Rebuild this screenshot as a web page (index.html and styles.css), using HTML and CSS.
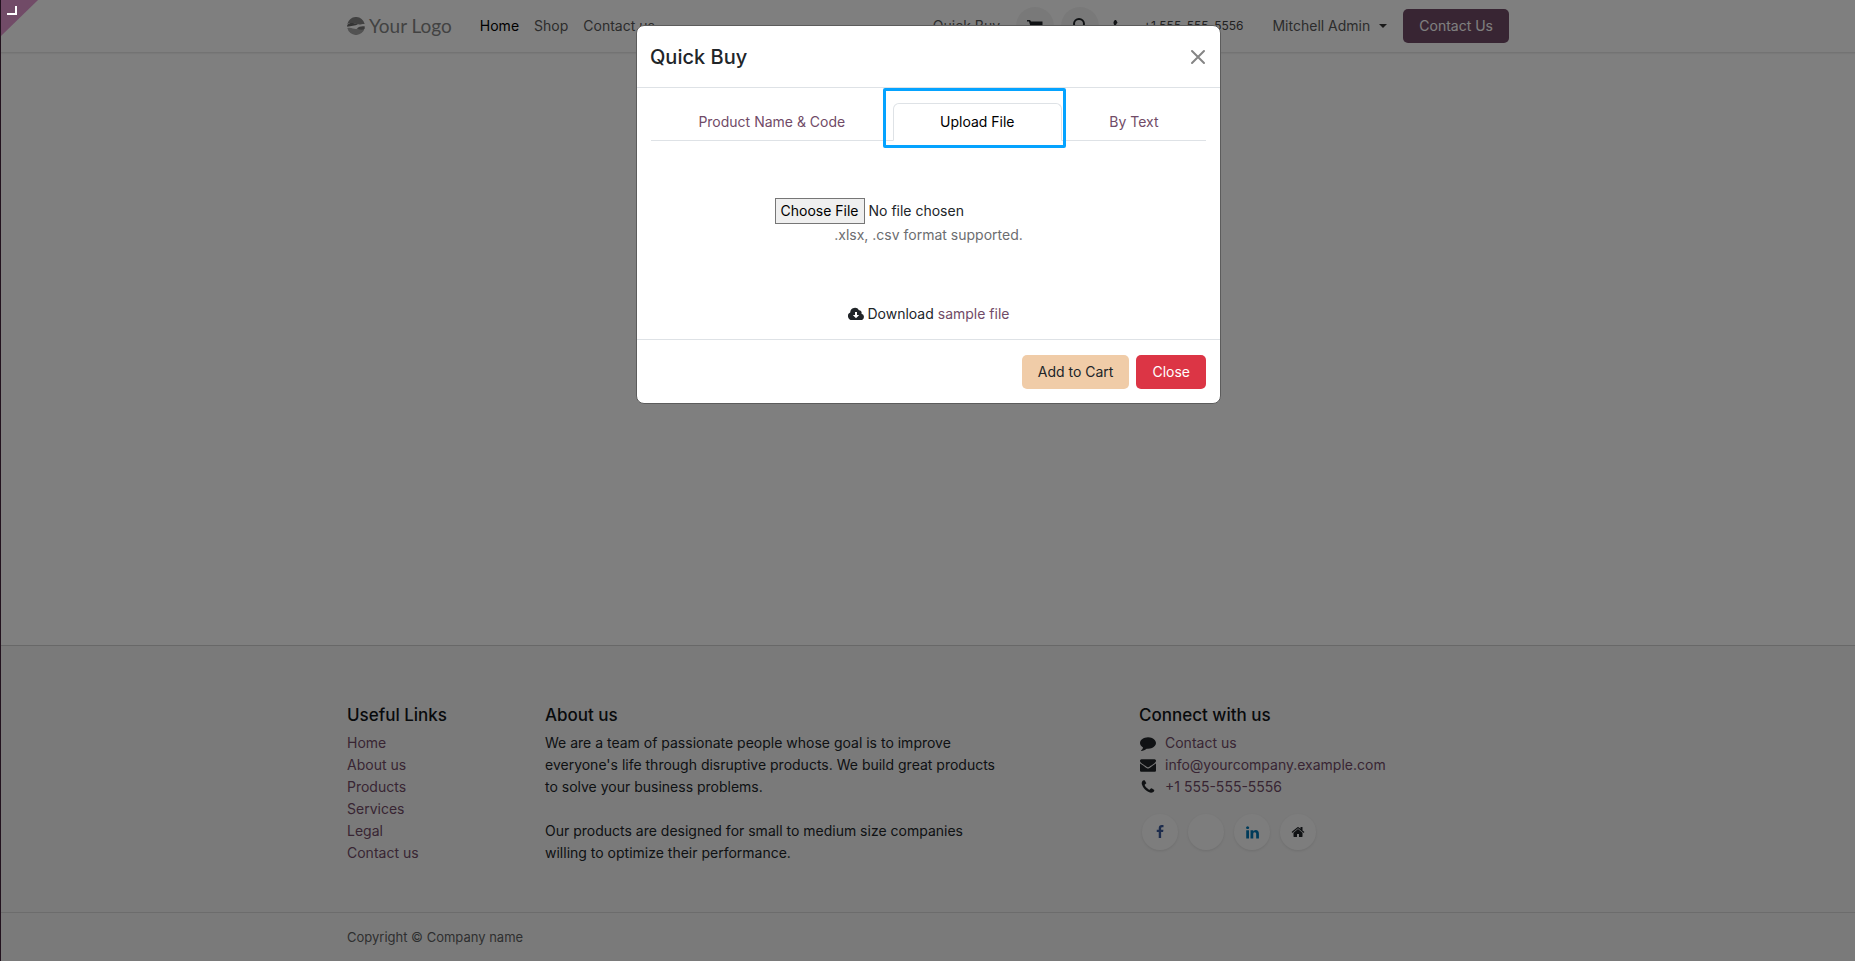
FILE: index.html
```html
<!DOCTYPE html>
<html lang="en">
<head>
<meta charset="utf-8">
<title>Quick Buy</title>
<meta name="viewport" content="width=device-width, initial-scale=1">
<link rel="stylesheet" href="styles.css">
</head>
<body>
<svg class="sprite" aria-hidden="true">
  <symbol id="phone" viewBox="0 0 1792 1792"><path d="M1600 1240q0 27-10 70.500t-21 68.500q-21 50-122 106-94 51-186 51-27 0-53-3.500t-57-12.500-47-14.500-55.500-20.500-49.500-18q-98-35-175-83-127-79-264-216t-216-264q-48-77-83-175-3-9-18-49.500t-20.500-55.500-14.500-47-12.500-57-3.500-53q0-92 51-186 56-101 106-122 25-11 68.500-21t70.500-10q14 0 21 3 18 6 53 76 11 19 30 54t35 63.500 31 53.500q3 4 17.500 25t21.500 35.500 7 28.500q0 20-28.500 50t-62 55-62 53-28.500 46q0 9 5 22.500t8.500 20.500 14 24 11.500 19q76 137 174 235t235 174q2 1 19 11.500t24 14 20.500 8.500 22.500 5q18 0 46-28.500t53-62 55-62 50-28.500q14 0 28.500 7t35.500 21.500 25 17.500q25 15 53.500 31t63.500 35 54 30q70 35 76 53 3 7 3 21z"/></symbol>
</svg>

<header class="site-header">
  <div class="container header-row">
    <a class="logo" href="#">
      <svg width="18" height="18" viewBox="0 0 18 18" aria-hidden="true">
        <path fill="#858585" d="M.3 7a8.900 8.900 0 0 1 17.400 0c-2-.5-4 .8-7 .3S4 5 .3 7z"/>
        <path fill="#696969" d="M.2 8c3-3 6-2 10.800-.5C8 8.500 4 9 .2 9.800z"/>
        <path fill="#a5a5a5" d="M.3 11c4-1 5.700 1 8.700 1s6-2 8.700-1a8.900 8.900 0 0 1-17.400 0z"/>
        <path fill="#777" d="M17.900 9.500c-3-.5-6 0-8 2 3 1.500 6 1.500 7.500.5z"/>
      </svg>
      <span>Your Logo</span>
    </a>
    <nav class="main-nav">
      <a class="current" href="#">Home</a>
      <a href="#">Shop</a>
      <a href="#">Contact us</a>
    </nav>
    <div class="header-tools">
      <a class="quick" href="#">Quick Buy</a>
      <a class="round" href="#" aria-label="Cart">
        <svg width="16" height="16" viewBox="0 0 16 16" aria-hidden="true"><path d="M0 2h3l1 1.500h11.500v6L5 11v1h9v1H4V10L2 3.500H0z"/><circle cx="5" cy="14" r="1.500"/><circle cx="13" cy="14" r="1.500"/></svg>
      </a>
      <button class="round" type="button" aria-label="Search">
        <svg class="line" width="16" height="16" viewBox="0 0 16 16" aria-hidden="true"><circle cx="7" cy="6" r="5"/><path d="M11 10l4 4"/></svg>
      </button>
      <a class="tel" href="#"><svg class="icon" width="14" height="14" aria-hidden="true"><use href="#phone"/></svg><span>+1 555-555-5556</span></a>
      <button class="user" type="button">Mitchell Admin</button>
      <a class="btn btn-primary" href="#">Contact Us</a>
    </div>
  </div>
</header>

<main class="page"></main>

<footer class="site-footer">
  <div class="container footer-grid">
    <section>
      <h2>Useful Links</h2>
      <ul>
        <li><a href="#">Home</a></li>
        <li><a href="#">About us</a></li>
        <li><a href="#">Products</a></li>
        <li><a href="#">Services</a></li>
        <li><a href="#">Legal</a></li>
        <li><a href="#">Contact us</a></li>
      </ul>
    </section>
    <section class="about">
      <h2>About us</h2>
      <p>We are a team of passionate people whose goal is to improve<br>everyone's life through disruptive products. We build great products<br>to solve your business problems.</p>
      <p>Our products are designed for small to medium size companies<br>willing to optimize their performance.</p>
    </section>
    <section>
      <h2>Connect with us</h2>
      <ul class="contact">
        <li><svg class="icon" width="16" height="16" viewBox="0 0 1792 1792" aria-hidden="true"><path d="M1792 896q0 174-120 321.500t-326 233-450 85.500q-70 0-145-8-198 175-460 242-49 14-114 22-17 2-30.500-9t-17.500-29v-1q-3-4-.5-12t2-10 4.500-9.500l6-9 7-8.500 8-9q7-8 31-34.500t34.500-38 31-39.500 32.500-51 27-59 26-76q-157-89-247.500-220t-90.500-281q0-130 71-248.500t191-204.500 286-136.500 348-50.500q244 0 450 85.500t326 233 120 321.500z"/></svg><a href="#">Contact us</a></li>
        <li><svg class="icon" width="16" height="16" viewBox="0 0 1792 1792" aria-hidden="true"><path d="M1792 710v794q0 66-47 113t-113 47h-1472q-66 0-113-47t-47-113v-794q44 49 101 87 362 246 497 345 57 42 92.500 65.500t94.500 48 110 24.500h2q51 0 110-24.500t94.500-48 92.500-65.500q170-123 498-345 57-39 100-87zm0-294q0 79-49 151t-122 123q-376 261-468 325-10 7-42.500 31t-54 38.500-52 32.500-57.500 27-50 9h-2q-23 0-50-9t-57.500-27-52-32.500-54-38.500-42.500-31q-91-64-262-182.500t-205-142.500q-62-42-117-115.500t-55-136.500q0-78 41.500-130t118.500-52h1472q65 0 112.500 47t47.500 113z"/></svg><a href="#">info@yourcompany.example.com</a></li>
        <li><svg class="icon" width="16" height="16" aria-hidden="true"><use href="#phone"/></svg><a href="#">+1 555-555-5556</a></li>
      </ul>
      <div class="social">
        <a class="facebook" href="#" aria-label="Facebook"><svg width="14" height="14" viewBox="0 0 1792 1792"><path d="M1343 12v264h-157q-86 0-116 36t-30 108v189h293l-39 296h-254v759h-306v-759h-255v-296h255v-218q0-186 104-288.500t277-102.500q147 0 228 12z"/></svg></a>
        <a href="#" aria-label="X"></a>
        <a class="linkedin" href="#" aria-label="LinkedIn"><svg width="15" height="15" viewBox="0 0 1792 1792"><path d="M477 625v991h-330v-991h330zm21-306q1 73-50.500 122t-135.500 49h-2q-82 0-132-49t-50-122q0-74 51.500-122.500t134.500-48.500 133 48.500 51 122.500zm1166 729v568h-329v-530q0-105-40.500-164.500t-126.500-59.500q-63 0-105.500 34.500t-63.500 85.500q-11 30-11 81v553h-329q2-399 2-647t-1-296l-1-48h329v144h-2q20-32 41-56t56.500-52 87-43.500 114.500-15.500q171 0 275 113.500t104 332.500z"/></svg></a>
        <a href="#" aria-label="Home"><svg width="14" height="14" viewBox="0 0 1792 1792"><path d="M1472 992v480q0 26-19 45t-45 19h-384v-384h-256v384h-384q-26 0-45-19t-19-45v-480q0-1 .5-3t.5-3l575-474 575 474q1 2 1 6zm223-69l-62 74q-8 9-21 11h-3q-13 0-21-7l-692-577-692 577q-12 8-24 7-13-2-21-11l-62-74q-8-10-7-23.500t11-21.500l719-599q32-26 76-26t76 26l244 204v-195q0-14 9-23t23-9h192q14 0 23 9t9 23v408l219 182q10 8 11 21.500t-7 23.500z"/></svg></a>
      </div>
    </section>
  </div>
  <div class="copyright"><div class="container">Copyright © Company name</div></div>
</footer>

<div class="backdrop">
  <dialog class="modal" open aria-labelledby="modal-title">
    <header class="modal-header">
      <h1 id="modal-title">Quick Buy</h1>
      <button class="close" type="button" aria-label="Close dialog"><svg class="line" width="16" height="16" viewBox="0 0 16 16"><path d="M2 2l12 12M14 2L2 14"/></svg></button>
    </header>
    <div class="modal-body">
      <div class="tabs" role="tablist">
        <button type="button" role="tab" aria-selected="false">Product Name &amp; Code</button>
        <button type="button" role="tab" aria-selected="true">Upload File<span class="highlight"></span></button>
        <button type="button" role="tab" aria-selected="false">By Text</button>
      </div>
      <div class="upload">
        <input id="order-file" type="file" accept=".xlsx,.csv">
        <label for="order-file">.xlsx, .csv format supported.</label>
      </div>
      <p class="download">
        <svg width="16" height="16" viewBox="0 0 16 16" aria-hidden="true"><path d="M4 14a4 4 0 0 1-1.800-7.600A4.700 4.700 0 0 1 11 4.300a2.600 2.600 0 0 1 2.500 3.400A3.200 3.200 0 0 1 12.800 14z"/><path fill="#fff" d="M7 6h2v3h2.200L8 12.200 4.800 9H7z"/></svg>
        Download <a href="#">sample file</a>
      </p>
    </div>
    <footer class="modal-footer">
      <button class="btn btn-cart" type="button">Add to Cart</button>
      <button class="btn btn-danger" type="button">Close</button>
    </footer>
  </dialog>
</div>
<a class="corner" href="#" aria-label="Open backend"><svg width="37" height="36" viewBox="0 0 37 36"><path fill="#714b67" d="M0 0h37L0 36z"/><path fill="none" stroke="#fff" stroke-width="2" d="M6 14h9V6"/></svg></a>
</body>
</html>
```
FILE: styles.css
```css
* { box-sizing: border-box; }
body {
  margin: 0;
  min-height: 100vh;
  display: flex;
  flex-direction: column;
  border-left: 1px solid #45243c;
  background: #fff;
  color: #212529;
  font: 14px/22px Inter, sans-serif;
}
a { color: #714b67; text-decoration: none; }
button, input { font: inherit; }
button { cursor: pointer; }
h1, h2, p, ul { margin: 0; padding: 0; font-weight: 400; }
ul { list-style: none; }
svg { fill: currentColor; }
.line { fill: none; stroke: currentColor; stroke-width: 2; stroke-linecap: round; }
.sprite { position: absolute; width: 0; height: 0; }
.icon { color: #212529; flex: none; }
.container { width: 100%; max-width: 1190px; margin: 0 auto; padding: 0 14px; }

.site-header { border-bottom: 1px solid #e6e6e6; box-shadow: 0 1px 1px #f3f3f3; }
.header-row { display: flex; align-items: center; min-height: 52px; }
.logo { display: flex; align-items: center; gap: 4px; margin-right: 28px; color: #858585; font: 19px/22px Lato, sans-serif; }
.main-nav { display: flex; gap: 15px; }
.main-nav a, .quick, .user { color: #595959; }
.main-nav .current { color: #000; }
.header-tools { display: flex; align-items: center; margin-left: auto; }
.round { display: flex; align-items: center; justify-content: center; width: 38px; height: 38px; margin-left: 7px; padding: 0; border: 0; border-radius: 50%; background: #f3f3f3; color: #212529; }
.quick { margin-right: 9px; }
.tel { display: flex; align-items: center; gap: 17px; margin: 0 29px 0 13px; font-size: 12px; color: #444; }
.user { display: flex; align-items: center; gap: 9px; margin-right: 16px; padding: 0; border: 0; background: none; }
.user::after { content: ""; border: 4px solid transparent; border-top-color: #333; border-bottom: 0; }
.btn { display: inline-block; padding: 6px 16px; border: 0; border-radius: 5px; }
.btn-primary { background: #714b67; color: #fff; }

.page { flex: 1; }

.site-footer { border-top: 1px solid #d0d0d0; background: #f5f5f5; }
.footer-grid { display: grid; grid-template-columns: 198px 594px 1fr; padding-top: 58px; padding-bottom: 48px; }
.site-footer h2 { margin-bottom: 6px; font-size: 17px; line-height: 22px; font-weight: 500; color: #111418; }
.about p + p { margin-top: 22px; }
.contact li { display: flex; align-items: center; gap: 9px; }
.contact { padding-left: 1px; }
.social { display: flex; gap: 10px; margin: 16px 0 0 3px; }
.social a { display: flex; align-items: center; justify-content: center; width: 36px; height: 36px; border-radius: 50%; background: #fbfbfb; box-shadow: 0 1px 3px rgba(0, 0, 0, .1); color: #212529; }
.social .facebook { color: #3b5998; }
.social .linkedin { color: #0077b5; }
.copyright { padding: 13px 0; border-top: 1px solid #d8d8d8; font-size: 13px; color: #5d5f61; }

.backdrop { position: fixed; inset: 0; display: flex; align-items: flex-start; justify-content: center; padding: 25px 0 0 2px; background: rgba(0, 0, 0, .5); }
.modal { position: static; width: 100%; max-width: 585px; margin: 0; padding: 0; border: 1px solid #5c5c5c; border-radius: 8px; background: #fff; color: #212529; }
.modal-header { display: flex; align-items: center; justify-content: space-between; padding: 18px 14px 17px 13px; border-bottom: 1px solid #dee2e6; }
.modal-header h1 { font-size: 20px; line-height: 26px; font-weight: 500; }
.close { display: flex; padding: 0; border: 0; background: none; color: #858585; }
.modal-body { padding: 15px 14px 14px; }
.tabs { display: flex; border-bottom: 1px solid #dee2e6; }
.tabs button { position: relative; flex: 1 1 auto; margin-bottom: -1px; padding: 7px 14px; border: 1px solid transparent; border-radius: 6px 6px 0 0; background: none; color: #714b67; }
.tabs [aria-selected="true"] { border-color: #dee2e6 #dee2e6 #fff; background: #fff; color: #000; }
.highlight { position: absolute; inset: -16px -5px -8px -11px; border: 3px solid #05a3ff; border-radius: 2px; }
.upload { display: flex; flex-direction: column; align-items: center; padding: 57px 0; }
.upload input { width: 308px; }
.upload input::file-selector-button { padding: 1px 5px; border: 1px solid #767676; border-radius: 0; background: #efefef; color: #000; font: inherit; }
.upload label { color: #6c6d70; }
.download { text-align: center; }
.download svg { vertical-align: -3px; }
.modal-footer { display: flex; justify-content: flex-end; gap: 7px; padding: 15px 14px 14px; border-top: 1px solid #dee2e6; }
.btn-cart { background: #f0cca8; color: #212529; }
.btn-danger { background: #dc3545; color: #fff; }

.corner { position: fixed; top: 0; left: 1px; display: flex; }
```
